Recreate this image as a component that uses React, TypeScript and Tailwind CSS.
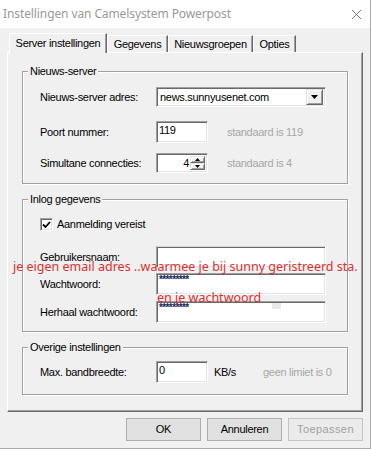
import React from "react";

const sunken =
    "border border-t-[#a0a0a0] border-l-[#a0a0a0] border-r-white border-b-white shadow-[inset_1px_1px_0_#696969,inset_-1px_-1px_0_#e3e3e3] bg-white";
const raised =
    "border border-t-[#e3e3e3] border-l-[#e3e3e3] border-r-[#696969] border-b-[#696969] shadow-[inset_1px_1px_0_#fff,inset_-1px_-1px_0_#a0a0a0] bg-[#f0f0f0]";
const hint = "text-[#a6a6a6]";

const Group = ({
    title,
    className,
    children,
}: {
    title: string;
    className?: string;
    children: React.ReactNode;
}) => (
    <fieldset
        className={`border border-[#a0a0a0] shadow-[inset_1px_1px_0_#fff,1px_1px_0_#fff] ${className ?? ""}`}
    >
        <legend className="ml-[5px] px-[2px] h-[14px] leading-[14px] bg-[#f0f0f0]">
            {title}
        </legend>
        <div className="pl-[17px]">{children}</div>
    </fieldset>
);

const Row = ({
    label,
    className,
    children,
}: {
    label: string;
    className?: string;
    children: React.ReactNode;
}) => (
    <div className={`flex items-center ${className ?? ""}`}>
        <span className="w-[116px] shrink-0">{label}</span>
        {children}
    </div>
);

const Password = ({ light }: { light?: boolean }) => (
    <div
        className={`w-[170px] h-[22px] ${sunken} ${light ? "border-t-[#d8d8d8] shadow-[inset_1px_0_0_#696969,inset_-1px_-1px_0_#e3e3e3]" : ""} px-[2px]`}
    >
        {!light && (
            <span className="block text-[10px] font-bold leading-[9px] pt-[1px] text-[#14245a] tracking-[-0.6px]">
                *********
            </span>
        )}
    </div>
);

const Arrow = ({ up }: { up?: boolean }) => (
    <svg width="5" height="3" viewBox="0 0 5 3">
        <path d={up ? "M0 3 L2.5 0 L5 3 Z" : "M0 0 L5 0 L2.5 3 Z"} fill="#000" />
    </svg>
);

export default function App() {
    return (
        <div className="relative w-[371px] h-[449px] overflow-hidden bg-[#f0f0f0] border-r border-b border-[#aaaaaa] font-['Liberation_Sans',Arial,sans-serif] text-[11px] tracking-[-0.3px] text-black">
            {/* title bar */}
            <div className="h-[28px] bg-white flex items-center justify-between pl-[3px] pr-[9px]">
                <span className="font-['Noto_Sans',sans-serif] text-[12px] tracking-[-0.1px] text-[#999999]">
                    Instellingen van Camelsystem Powerpost
                </span>
                <svg width="9" height="9" viewBox="0 0 9 9">
                    <path d="M0 0 L9 9 M9 0 L0 9" stroke="#777" strokeWidth="1" />
                </svg>
            </div>

            {/* tabs */}
            <div className="flex items-end pl-[9px] mt-[5px] h-[19px] relative z-10">
                <div className="w-[98px] h-[20px] -mb-px bg-[#f0f0f0] border-l border-t border-r border-l-white border-t-white border-r-[#696969] shadow-[inset_-1px_0_0_#a0a0a0] flex items-center justify-center pb-[1px]">
                    Server instellingen
                </div>
                {[
                    ["Gegevens", "w-[61px]"],
                    ["Nieuwsgroepen", "w-[85px]"],
                    ["Opties", "w-[43px]"],
                ].map(([t, w]) => (
                    <div
                        key={t}
                        className={`${w} h-[17px] border-l border-t border-r border-l-white border-t-white border-r-[#696969] shadow-[inset_-1px_0_0_#a0a0a0] flex items-center justify-center`}
                    >
                        {t}
                    </div>
                ))}
            </div>

            {/* panel */}
            <div className="ml-[7px] w-[356px] h-[360px] border border-t-white border-l-white border-r-[#696969] border-b-[#696969] shadow-[inset_-1px_-1px_0_#a0a0a0] px-[14px] pt-[11px]">
                <Group title="Nieuws-server" className="pb-[10px]">
                    <Row label="Nieuws-server adres:" className="mt-[9px]">
                        <div className={`w-[170px] h-[20px] ${sunken} flex items-center p-[2px]`}>
                            <span className="flex-1 pl-[1px]">news.sunnyusenet.com</span>
                            <div className={`w-[17px] h-[16px] ${raised} flex items-center justify-center`}>
                                <svg width="7" height="4" viewBox="0 0 7 4">
                                    <path d="M0 0 L7 0 L3.5 4 Z" fill="#000" />
                                </svg>
                            </div>
                        </div>
                    </Row>
                    <Row label="Poort nummer:" className="mt-[14px]">
                        <div className={`w-[52px] h-[22px] ${sunken} px-[2px] pt-[1px] leading-[14px]`}>
                            119
                        </div>
                        <span className={`ml-[19px] ${hint}`}>standaard is 119</span>
                    </Row>
                    <Row label="Simultane connecties:" className="mt-[10px]">
                        <div className={`w-[52px] h-[20px] ${sunken} flex p-[2px]`}>
                            <span className="flex-1 text-right pr-[1px] leading-[15px]">4</span>
                            <div className="w-[15px] flex flex-col">
                                <div className={`h-[8px] ${raised} flex items-center justify-center`}>
                                    <Arrow up />
                                </div>
                                <div className={`h-[8px] ${raised} flex items-center justify-center`}>
                                    <Arrow />
                                </div>
                            </div>
                        </div>
                        <span className={`ml-[19px] ${hint}`}>standaard is 4</span>
                    </Row>
                </Group>

                <Group title="Inlog gegevens" className="mt-[8px] pb-[8px]">
                    <div className="mt-[12px] h-[13px] flex items-center gap-[4px]">
                        <div className={`w-[13px] h-[13px] ${sunken} flex items-center justify-center`}>
                            <svg width="9" height="8" viewBox="0 0 9 8">
                                <path d="M1 3.5 L3.5 6 L8 1" stroke="#000" strokeWidth="1.8" fill="none" />
                            </svg>
                        </div>
                        <span>Aanmelding vereist</span>
                    </div>
                    <Row label="Gebruikersnaam:" className="mt-[15px]">
                        <Password light />
                    </Row>
                    <Row label="Wachtwoord:" className="mt-[5px]">
                        <Password />
                    </Row>
                    <Row label="Herhaal wachtwoord:" className="mt-[6px]">
                        <Password />
                    </Row>
                </Group>

                <Group title="Overige instellingen" className="mt-[8px] pb-[11px]">
                    <Row label="Max. bandbreedte:" className="mt-[7px]">
                        <div className={`w-[52px] h-[22px] ${sunken} px-[2px] pt-[1px] leading-[14px]`}>
                            0
                        </div>
                        <span className="ml-[6px] w-[49px]">KB/s</span>
                        <span className={hint}>geen limiet is 0</span>
                    </Row>
                </Group>
            </div>

            {/* buttons */}
            <div className="flex justify-end gap-[6px] mt-[6px] pr-[7px]">
                <button className="w-[75px] h-[23px] bg-[#e1e1e1] border border-[#adadad]">OK</button>
                <button className="w-[75px] h-[23px] bg-[#e1e1e1] border border-[#adadad]">Annuleren</button>
                <button className="w-[75px] h-[23px] bg-[#ebebeb] border border-[#c4c4c4] text-[#a0a0a0] tracking-[0.4px]">
                    Toepassen
                </button>
            </div>

            {/* red annotations drawn over the dialog */}
            <span className="absolute left-[13px] top-[259px] font-['Noto_Sans',sans-serif] text-[12.5px] leading-[16px] tracking-normal text-[#dc2f2f] whitespace-nowrap">
                je eigen email adres ..waarmee je bij sunny geristreerd sta.
            </span>
            <span className="absolute left-[157px] top-[290px] font-['Noto_Sans',sans-serif] text-[12.5px] leading-[16px] tracking-normal text-[#dc2f2f] whitespace-nowrap">
                en je wachtwoord
            </span>
            <div className="absolute left-[272px] top-[303px] w-[9px] h-[6px] bg-[#e8e8e8]" />
        </div>
    );
}
